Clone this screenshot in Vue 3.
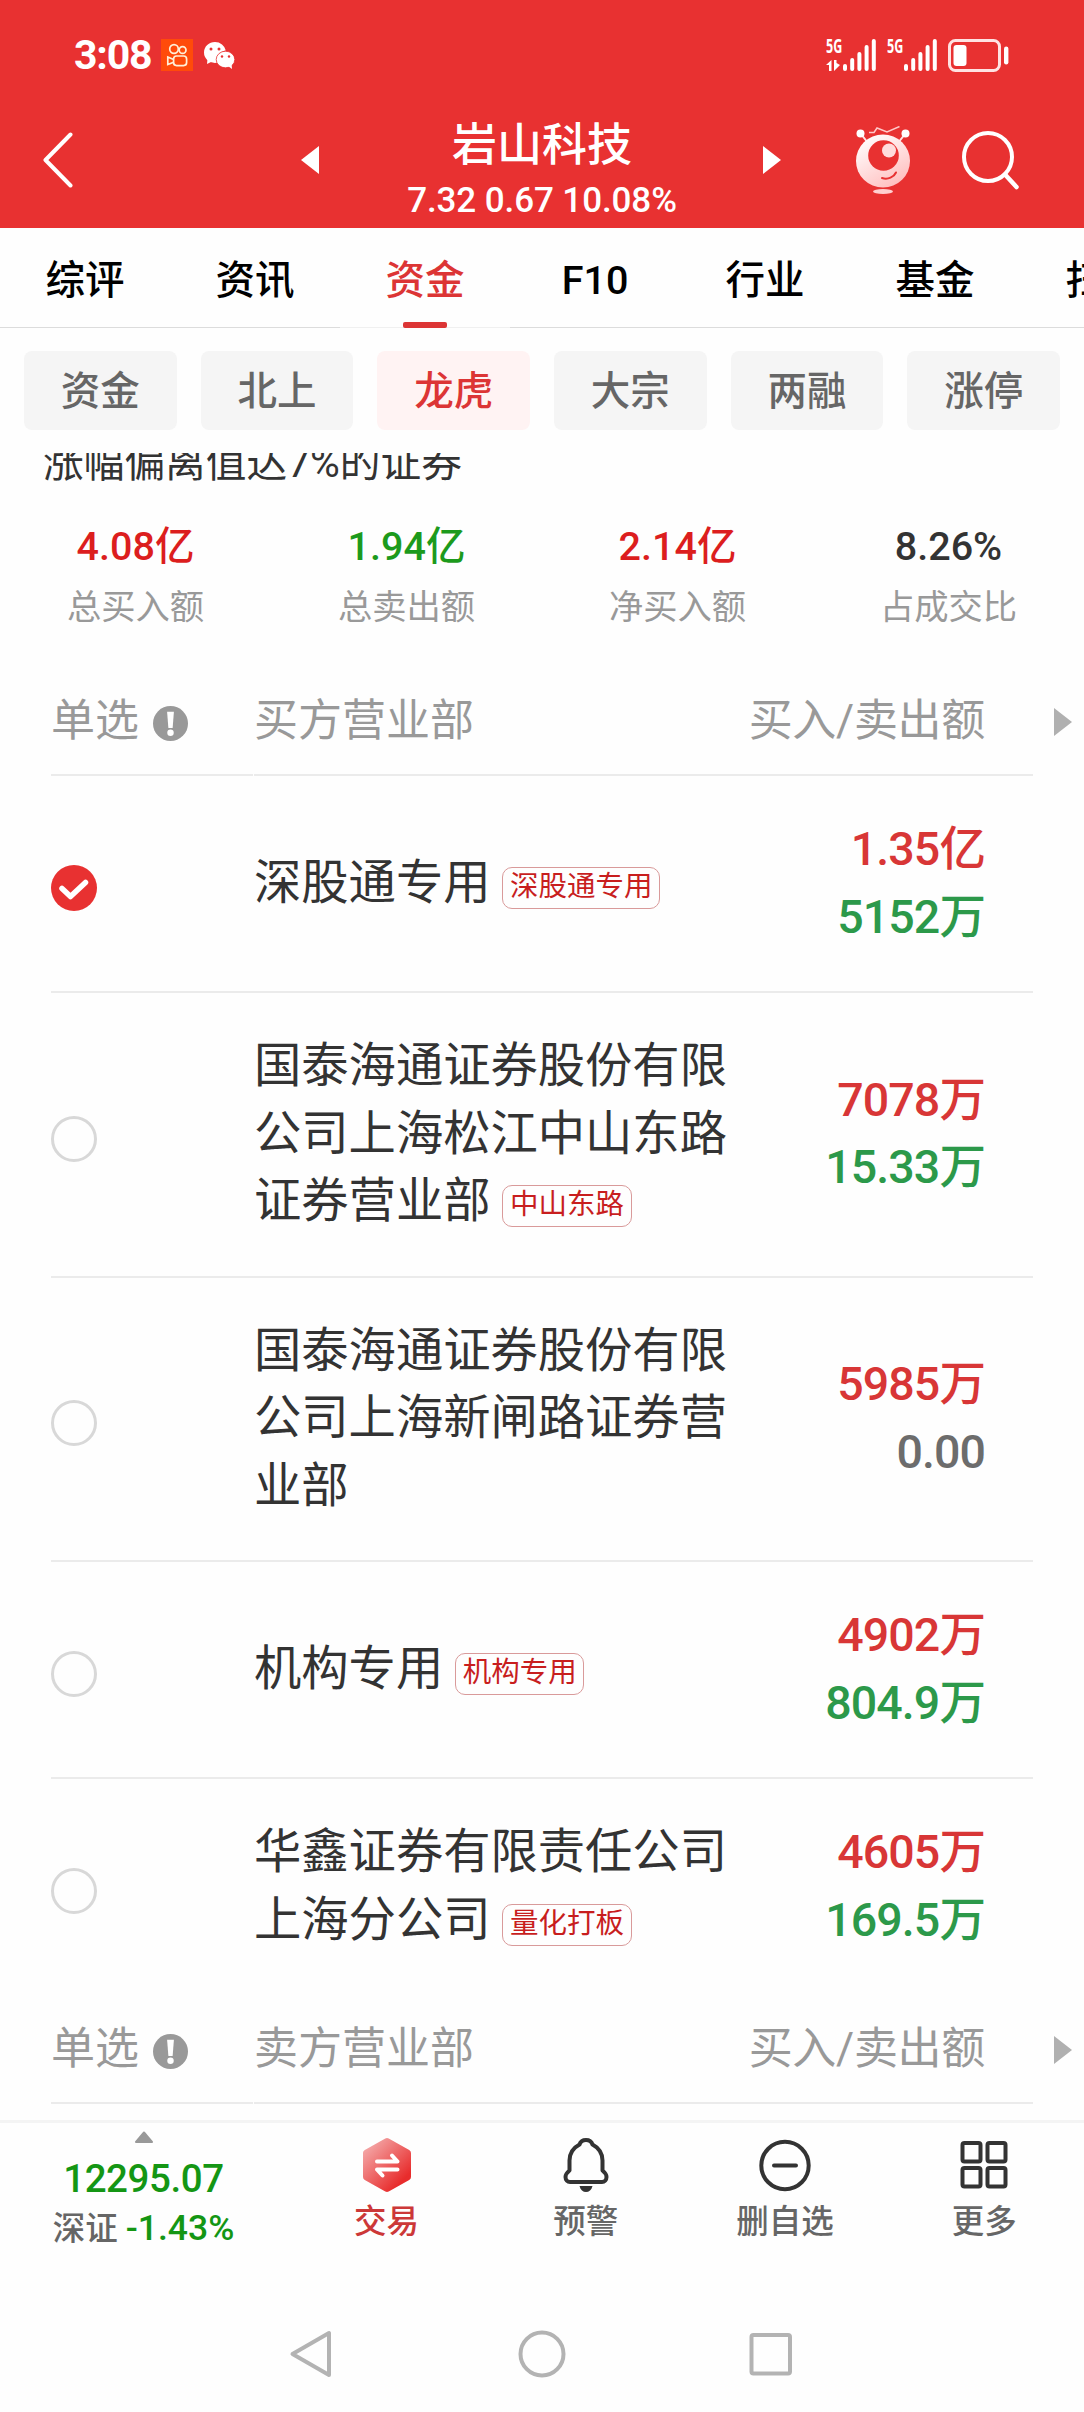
<template>
  <div class="page">
    <header class="top">
      <div class="status-bar">
        <span class="time">3:08</span>
        <svg class="app-badge" viewBox="0 0 32 32" width="32" height="32">
          <rect width="32" height="32" fill="#ff4b0a" />
          <g fill="none" stroke="#fff0d8" stroke-width="1.7">
            <circle cx="13" cy="10" r="4.3" />
            <circle cx="21.6" cy="11" r="3.4" />
            <rect x="12.6" y="17" width="13" height="9.6" rx="3" />
            <path d="M12.6 20.5L6.8 18v7.6l5.8-2.4" />
          </g>
        </svg>
        <svg class="wechat" viewBox="0 0 31 27" width="31" height="27">
          <path d="M11 0a11 10.5 0 1 0 0 21c1 0 2-.2 3-.5A10 9 0 0 1 21.8 8.5A11 10.5 0 0 0 11 0z" fill="#fff" />
          <path d="M3.5 17l-.5 5 5-2.5z" fill="#fff" />
          <ellipse cx="21.5" cy="17.5" rx="9.3" ry="8.3" fill="#fff" stroke="#e83131" stroke-width="0.8" />
          <path d="M24 24l4 3-.4-5z" fill="#fff" />
          <g fill="#e83131">
            <circle cx="7" cy="7" r="1.5" />
            <circle cx="15" cy="7" r="1.5" />
            <circle cx="18" cy="14.5" r="1.2" />
            <circle cx="25" cy="14.5" r="1.2" />
          </g>
        </svg>
        <div class="status-right">
          <div v-for="sim in sims" :key="sim.id" class="signal">
            <div class="net">
              <span class="net-type">5G</span>
              <svg v-if="sim.active" class="net-flow" viewBox="0 0 14 11" width="14" height="11">
                <path d="M0 5L5.5 0v11H3V5zM14 5L8 11V0h2.5v3z" fill="#fff" />
              </svg>
            </div>
            <svg viewBox="0 0 34 32" width="34" height="32" fill="#fff">
              <rect x="0" y="25" width="4" height="7" rx="2" />
              <rect x="7.2" y="19" width="4" height="13" rx="2" />
              <rect x="14.4" y="13" width="4" height="19" rx="2" />
              <rect x="21.6" y="6" width="4" height="26" rx="2" />
              <rect x="28.8" y="0" width="4" height="32" rx="2" />
            </svg>
          </div>
          <svg class="battery" viewBox="0 0 62 33" width="62" height="33">
            <rect x="1.5" y="1.5" width="50" height="30" rx="6" fill="none" stroke="#ffe2e2" stroke-width="3" />
            <rect x="5.5" y="6" width="13" height="21" rx="3" fill="#fff" />
            <rect x="56" y="7.5" width="4.4" height="18" rx="2.2" fill="#fff" />
          </svg>
        </div>
      </div>

      <div class="navbar">
        <svg class="back" viewBox="0 0 30 56" width="30" height="56">
          <path d="M27.500 2.500L2.500 28l25 25.500" fill="none" stroke="#fff" stroke-width="4" stroke-linecap="round" stroke-linejoin="round" />
        </svg>
        <svg class="prev" viewBox="0 0 18 28" width="18" height="28"><path d="M18 0v28L0 14z" fill="#fff" /></svg>
        <div class="stock">
          <div class="stock-name">岩山科技</div>
          <div class="stock-quote">7.32 0.67 10.08%</div>
        </div>
        <svg class="next" viewBox="0 0 18 28" width="18" height="28"><path d="M0 0v28l18-14z" fill="#fff" /></svg>
        <svg class="mascot" viewBox="0 0 54 68" width="54" height="68">
          <defs>
            <linearGradient id="mascotBody" x1="0.2" y1="0" x2="0.8" y2="1">
              <stop offset="0" stop-color="#fff" />
              <stop offset="1" stop-color="#ffbcbc" />
            </linearGradient>
          </defs>
          <path d="M5 8l7 9M49 8l-7 9" stroke="#ffe6e6" stroke-width="2" />
          <circle cx="4.5" cy="7.5" r="4" fill="#fff" />
          <circle cx="49.5" cy="7.5" r="4" fill="#fff" />
          <path d="M13 6.5h5l3-4.500 10 4 12.500-5.500" fill="none" stroke="#ffc9c9" stroke-width="1.5" />
          <ellipse cx="27" cy="35" rx="27" ry="26.5" fill="url(#mascotBody)" />
          <circle cx="27.5" cy="29.5" r="15.3" fill="#e83131" />
          <circle cx="33" cy="24.5" r="7" fill="#ffdcdc" />
          <path d="M26 52c6 2 12-1 14-5.500" fill="none" stroke="#e83131" stroke-width="2" stroke-linecap="round" />
          <ellipse cx="27" cy="65.5" rx="10" ry="2.5" fill="#ffd0d0" />
        </svg>
        <svg class="search" viewBox="0 0 58 60" width="58" height="60">
          <circle cx="26" cy="27" r="24" fill="none" stroke="#fff" stroke-width="4" />
          <path d="M43 44.500L54.500 57" stroke="#fff" stroke-width="4.5" stroke-linecap="round" />
        </svg>
      </div>
    </header>

    <nav class="tabs">
      <div v-for="tab in tabs" :key="tab" class="tab" :class="{ active: tab === activeTab }">{{ tab }}</div>
    </nav>

    <div class="chips">
      <div v-for="chip in chips" :key="chip" class="chip" :class="{ active: chip === activeChip }">{{ chip }}</div>
    </div>

    <main class="content">
      <div class="reason"><div class="reason-text">涨幅偏离值达7%的证券</div></div>

      <div class="stats">
        <div v-for="stat in stats" :key="stat.label" class="stat">
          <div class="stat-value" :class="stat.color">{{ stat.value }}</div>
          <div class="stat-label">{{ stat.label }}</div>
        </div>
      </div>

      <template v-for="section in sections" :key="section.title">
        <div class="head-wrap">
          <div class="table-head">
            <div class="head-radio">
              单选
              <svg viewBox="0 0 36 36" width="35" height="35">
                <circle cx="18" cy="18" r="18" fill="#999" />
                <path d="M14.500 6h7l-1.300 16.500h-4.400z" fill="#fff" />
                <circle cx="18" cy="27.5" r="3.3" fill="#fff" />
              </svg>
            </div>
            <div class="head-main">
              <span>{{ section.title }}</span>
              <span class="head-amount">买入/卖出额</span>
            </div>
          </div>
          <svg class="head-arrow" viewBox="0 0 18 28" width="18" height="28"><path d="M0 0v28l18-14z" fill="#b0b0b0" /></svg>
        </div>

        <div v-for="(row, i) in section.rows" :key="i" class="row">
          <div class="radio-cell">
            <svg v-if="row.checked" viewBox="0 0 46 46" width="46" height="46">
              <circle cx="23" cy="23" r="23" fill="#e83131" />
              <path d="M11 23.500l8.500 8 15-14" fill="none" stroke="#fff" stroke-width="5.5" stroke-linecap="round" stroke-linejoin="round" />
            </svg>
            <span v-else class="radio"></span>
          </div>
          <div class="broker">{{ row.name }}<span v-if="row.tag" class="tag">{{ row.tag }}</span></div>
          <div class="amounts">
            <div class="buy">{{ row.buy }}</div>
            <div :class="row.sell === '0.00' ? 'zero' : 'sell'">{{ row.sell }}</div>
          </div>
        </div>
      </template>
    </main>

    <footer class="bottom">
      <div class="index">
        <svg viewBox="0 0 20 13" width="20" height="13">
          <path d="M10 1.500L18 11H2z" fill="#999" stroke="#999" stroke-width="2" stroke-linejoin="round" />
        </svg>
        <div class="index-value">12295.07</div>
        <div class="index-change">深证 <span>-1.43%</span></div>
      </div>
      <div class="action trade">
        <svg viewBox="0 0 56 56" width="56" height="56">
          <defs>
            <linearGradient id="tradeFill" x1="0.1" y1="0.1" x2="0.8" y2="0.9">
              <stop offset="0" stop-color="#f3a0a0" />
              <stop offset="1" stop-color="#e82c2c" />
            </linearGradient>
          </defs>
          <path d="M28 4.500L48.500 16v24L28 51.500 7.500 40V16z" fill="url(#tradeFill)" stroke="url(#tradeFill)" stroke-width="7" stroke-linejoin="round" />
          <path d="M18 24.500h20.500l-5.500-6M38.500 32.500H18l5.500 6" fill="none" stroke="#fff" stroke-width="4" stroke-linecap="round" stroke-linejoin="round" />
        </svg>
        <span>交易</span>
      </div>
      <div class="action">
        <svg viewBox="0 0 56 56" width="56" height="56">
          <path d="M28 3c-3.500 0-5.500 1.500-6.500 4.500-6.500 3.500-10 9-10 16v10c-2.500 2-4 4-4 6.500 0 3 2 5 4.500 5h32c2.500 0 4.500-2 4.500-5 0-2.500-1.500-4.500-4-6.500v-10c0-7-3.500-12.500-10-16C33.500 4.500 31.500 3 28 3z" fill="none" stroke="#333" stroke-width="4" stroke-linejoin="round" />
          <path d="M21.500 49h13c-1 4-3.500 6-6.500 6s-5.500-2-6.500-6z" fill="#333" />
        </svg>
        <span>预警</span>
      </div>
      <div class="action">
        <svg viewBox="0 0 56 56" width="56" height="56" fill="none" stroke="#333" stroke-width="4" stroke-linecap="round">
          <circle cx="28" cy="28.5" r="23.7" />
          <path d="M17 28.500h22" />
        </svg>
        <span>删自选</span>
      </div>
      <div class="action">
        <svg viewBox="0 0 56 56" width="56" height="56" fill="none" stroke="#333" stroke-width="4">
          <rect x="6.5" y="6" width="18" height="18.5" rx="2" />
          <rect x="31.5" y="6" width="18" height="18.5" rx="2" />
          <rect x="6.5" y="31" width="18" height="18.5" rx="2" />
          <rect x="31.5" y="31" width="18" height="18.5" rx="2" />
        </svg>
        <span>更多</span>
      </div>
    </footer>

    <div class="system-nav">
      <svg viewBox="0 0 48 48" width="48" height="48"><path d="M40 3v42L3.500 24z" /></svg>
      <svg viewBox="0 0 48 48" width="48" height="48"><circle cx="24" cy="24" r="21.5" /></svg>
      <svg viewBox="0 0 48 48" width="48" height="48"><rect x="4.5" y="5" width="38.5" height="38.5" rx="2" /></svg>
    </div>
  </div>
</template>

<script setup>
const sims = [
  { id: 1, active: true },
  { id: 2, active: false },
];

const tabs = ['综评', '资讯', '资金', 'F10', '行业', '基金', '扫雷'];
const activeTab = '资金';

const chips = ['资金', '北上', '龙虎', '大宗', '两融', '涨停'];
const activeChip = '龙虎';

const stats = [
  { value: '4.08亿', label: '总买入额', color: 'red' },
  { value: '1.94亿', label: '总卖出额', color: 'green' },
  { value: '2.14亿', label: '净买入额', color: 'red' },
  { value: '8.26%', label: '占成交比', color: '' },
];

const sections = [
  {
    title: '买方营业部',
    rows: [
      { name: '深股通专用', tag: '深股通专用', buy: '1.35亿', sell: '5152万', checked: true },
      { name: '国泰海通证券股份有限公司上海松江中山东路证券营业部', tag: '中山东路', buy: '7078万', sell: '15.33万' },
      { name: '国泰海通证券股份有限公司上海新闸路证券营业部', buy: '5985万', sell: '0.00' },
      { name: '机构专用', tag: '机构专用', buy: '4902万', sell: '804.9万' },
      { name: '华鑫证券有限责任公司上海分公司', tag: '量化打板', buy: '4605万', sell: '169.5万' },
    ],
  },
  { title: '卖方营业部', rows: [] },
];
</script>

<style>
body {
  margin: 0;
  background: #fefefe;
}
</style>

<style scoped>
.page {
  display: flex;
  flex-direction: column;
  width: 1084px;
  height: 2412px;
  overflow: hidden;
  background: #fefefe;
  color: #333;
  font-family: Roboto, "Noto Sans CJK SC", sans-serif;
}

svg {
  display: block;
  flex-shrink: 0;
}

.top {
  height: 228px;
  flex-shrink: 0;
  background: #e83131;
  color: #fff;
}

.status-bar {
  display: flex;
  align-items: center;
  height: 50px;
  padding: 30px 74px 0 74px;
}

.time {
  width: 87px;
  font-size: 41px;
  font-weight: 700;
  line-height: 50px;
  letter-spacing: -1.2px;
}

.wechat {
  margin-left: 11px;
}

.status-right {
  display: flex;
  align-items: center;
  margin-left: auto;
}

.signal {
  display: flex;
  height: 32px;
  margin-right: 10px;
}

.net {
  display: flex;
  flex-direction: column;
  justify-content: space-between;
  width: 17px;
}

.net-type {
  width: 17px;
  font-family: "Open Sans", sans-serif;
  font-size: 19px;
  font-weight: 700;
  line-height: 14px;
  transform: scaleX(0.66);
  transform-origin: left;
}

.navbar {
  display: flex;
  align-items: center;
  height: 135px;
  padding: 12px 0 0 43px;
}

.prev {
  margin-left: 228px;
}

.stock {
  width: 450px;
  margin: 26px -4px 0 -2px;
  text-align: center;
  white-space: nowrap;
}

.stock-name {
  font-size: 45px;
  font-weight: 500;
  line-height: 57px;
}

.stock-quote {
  font-size: 35px;
  font-weight: 500;
  line-height: 54px;
  letter-spacing: -0.1px;
}

.mascot {
  margin-left: 75px;
}

.search {
  margin-left: 52px;
}

.tabs {
  display: flex;
  height: 100px;
  flex-shrink: 0;
  overflow: hidden;
}

.tab {
  display: flex;
  flex-direction: column;
  align-items: center;
  flex: 0 0 170px;
  box-sizing: border-box;
  height: 100px;
  padding-top: 24px;
  border-bottom: 1px solid #dcdcdc;
  color: #000;
  font-size: 39.5px;
  font-weight: 500;
  line-height: 58px;
}

.tab.active {
  border-bottom-color: #f0f0f0;
  color: #dc3535;
}

.tab.active::after {
  content: "";
  width: 44px;
  height: 6px;
  margin-top: 12px;
  margin-bottom: -1px;
  border-radius: 2px;
  background: #dc3535;
}

.chips {
  display: flex;
  gap: 24px;
  flex-shrink: 0;
  padding: 23px 24px;
}

.chip {
  flex: 1;
  height: 79px;
  border-radius: 8px;
  background: #f5f5f5;
  color: #666;
  font-size: 39.5px;
  font-weight: 500;
  line-height: 81px;
  text-align: center;
}

.chip.active {
  background: #fff3f3;
  color: #dc3535;
}

.content {
  flex: 1;
  min-height: 0;
  overflow: hidden;
}

/* previous lines of the reason text are scrolled under the chips */
.reason {
  display: flex;
  align-items: flex-end;
  height: 39px;
  padding-left: 43px;
  overflow: hidden;
}

.reason-text {
  font-size: 40.7px;
  line-height: 58px;
}

.stats {
  display: flex;
  height: 152px;
  padding-top: 24px;
}

.stat {
  flex: 1;
  text-align: center;
}

.stat-value {
  font-size: 39.5px;
  font-weight: 500;
  line-height: 62px;
}

.stat-value.red {
  color: #dc1e1e;
}

.stat-value.green {
  color: #1c9a1c;
}

.stat-label {
  color: #999;
  font-size: 34.3px;
  line-height: 58px;
}

.head-wrap {
  display: flex;
  align-items: center;
  height: 108px;
  padding-left: 51px;
}

.table-head {
  display: flex;
  gap: 1px;
  width: 982px;
  color: #999;
  font-size: 44px;
  line-height: 106px;
}

.head-radio {
  display: flex;
  align-items: center;
  gap: 14px;
  width: 202px;
  border-bottom: 2px solid #ebebeb;
}

.head-radio svg {
  margin-top: 4px;
}

.head-main {
  display: flex;
  justify-content: space-between;
  flex: 1;
  padding-right: 48px;
  border-bottom: 2px solid #ebebeb;
}

.head-amount {
  letter-spacing: -0.3px;
}

.head-arrow {
  margin-left: 21px;
}

.row {
  display: flex;
  align-items: center;
  margin: 0 51px;
  padding: 40px 48px 40px 0;
  border-bottom: 2px solid #ebebeb;
  font-size: 47.3px;
  line-height: 67.5px;
}

.row:has(+ .head-wrap) {
  border-bottom-color: transparent;
}

.radio-cell {
  width: 203px;
  padding-top: 9px;
}

.radio {
  display: block;
  box-sizing: border-box;
  width: 46px;
  height: 46px;
  border: 3px solid #d8d8d8;
  border-radius: 50%;
}

.broker {
  width: 476px;
}

.tag {
  display: inline-block;
  box-sizing: border-box;
  height: 42px;
  margin: 3px 0 0 12px;
  padding: 0 6.5px;
  border: 1px solid #d99a9a;
  border-radius: 10px;
  color: #c81e1e;
  font-size: 28.5px;
  line-height: 38px;
  vertical-align: middle;
}

.amounts {
  flex: 1;
  font-size: 46.5px;
  font-weight: 500;
  letter-spacing: -0.9px;
  text-align: right;
  white-space: nowrap;
}

.buy {
  color: #d83636;
}

.sell {
  color: #2c994a;
}

.zero {
  color: #6c6c6c;
}

.bottom {
  display: flex;
  height: 147px;
  flex-shrink: 0;
  border-top: 3px solid #f4f4f4;
}

.index {
  display: flex;
  flex-direction: column;
  align-items: center;
  width: 287px;
  padding-top: 8px;
}

.index-value {
  margin-top: 9px;
  color: #149614;
  font-size: 38.5px;
  font-weight: 500;
  line-height: 52px;
  letter-spacing: -0.4px;
}

.index-change {
  color: #666;
  font-size: 32.5px;
  font-weight: 500;
  line-height: 46px;
  white-space: nowrap;
}

.index-change span {
  color: #149614;
  font-size: 35.5px;
}

.action {
  display: flex;
  flex-direction: column;
  align-items: center;
  flex: 1;
  padding-top: 14px;
  color: #666;
  font-size: 32.5px;
  font-weight: 500;
  line-height: 58px;
}

.action.trade {
  color: #cc3838;
}

.system-nav {
  display: flex;
  justify-content: center;
  gap: 181px;
  height: 82px;
  flex-shrink: 0;
  padding-top: 60px;
}

.system-nav svg {
  fill: none;
  stroke: #b3b3b3;
  stroke-width: 4;
  stroke-linejoin: round;
}
</style>
